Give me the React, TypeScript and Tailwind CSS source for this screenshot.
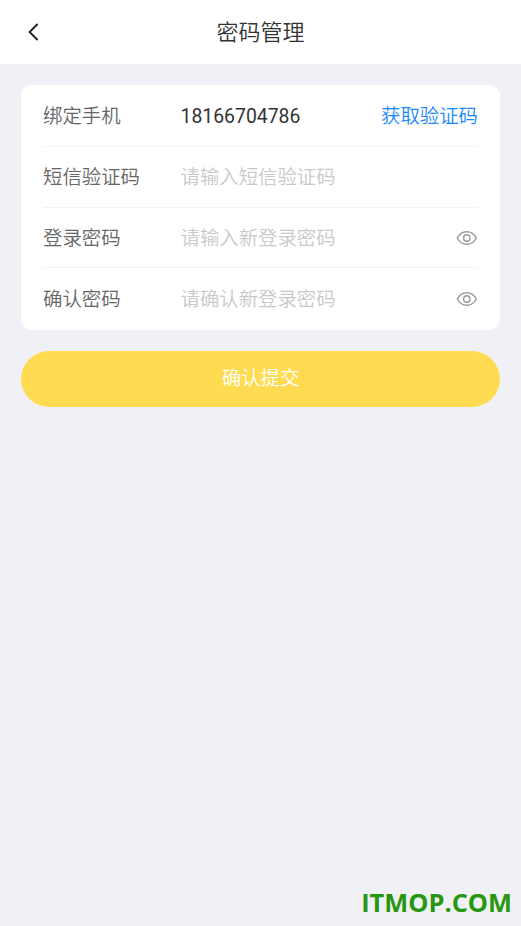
import React from "react";

const fields = [
  { label: "绑定手机", value: "18166704786", action: "获取验证码" },
  { label: "短信验证码", placeholder: "请输入短信验证码" },
  { label: "登录密码", placeholder: "请输入新登录密码", secret: true },
  { label: "确认密码", placeholder: "请确认新登录密码", secret: true },
];

function EyeIcon() {
  return (
    <svg width="22" height="16" viewBox="0 0 22 16" fill="none" stroke="#999999" strokeWidth="1.4">
      <path d="M1.3 8C3.3 4.1 7 1.7 10.8 1.7S18.3 4.1 20.3 8C18.3 11.9 14.6 14.3 10.8 14.3S3.3 11.9 1.3 8Z" />
      <circle cx="10.8" cy="8" r="3.2" />
    </svg>
  );
}

export default function App() {
  return (
    <div className="flex h-[926px] w-full flex-col bg-[#f0f1f6] font-[Roboto,'Noto_Sans_CJK_SC',sans-serif]">
      {/* Header */}
      <header className="grid h-16 shrink-0 grid-cols-[1fr_auto_1fr] items-center bg-white pl-7">
        <svg width="12" height="20" viewBox="0 0 12 20" fill="none" stroke="#222222" strokeWidth="1.9">
          <path d="M9.6 2L1.6 10L9.6 18" />
        </svg>
        <h1 className="-translate-x-3.5 pt-0.5 text-[22px] leading-8 font-[350] text-[#333333]">密码管理</h1>
      </header>

      <main className="flex flex-1 flex-col px-[21px] pt-[21px]">
        {/* Form card */}
        <div className="h-[245px] rounded-[11px] bg-white px-[22px]">
          {fields.map((field) => (
            <div
              key={field.label}
              className="flex h-[61px] items-center border-b border-[#f3f3f3] text-[19.4px] leading-7 first:h-[62px] nth-3:h-[60px] last:border-b-0 last:h-[62px]"
            >
              <span className="w-[137.5px] pt-0.5 font-[350] text-[#666666]">{field.label}</span>
              {field.value ? (
                <span className="flex-1 pt-0.5 text-[#333333]">{field.value}</span>
              ) : (
                <span className="flex-1 pt-0.5 font-[350] text-[#c8c9cc]">{field.placeholder}</span>
              )}
              {field.action && <button className="pt-0.5 font-[350] text-[#1989fa]">{field.action}</button>}
              {field.secret && <EyeIcon />}
            </div>
          ))}
        </div>

        <button className="mt-[21px] h-[55.5px] rounded-full bg-[#ffdb51] text-[19.4px] font-[350] text-white">
          确认提交
        </button>

        <footer className="mt-auto -mr-3 pb-[5px] text-right font-['Open_Sans',sans-serif] text-[25.4px] font-bold text-[#279711]">
          ITMOP.COM
        </footer>
      </main>
    </div>
  );
}
